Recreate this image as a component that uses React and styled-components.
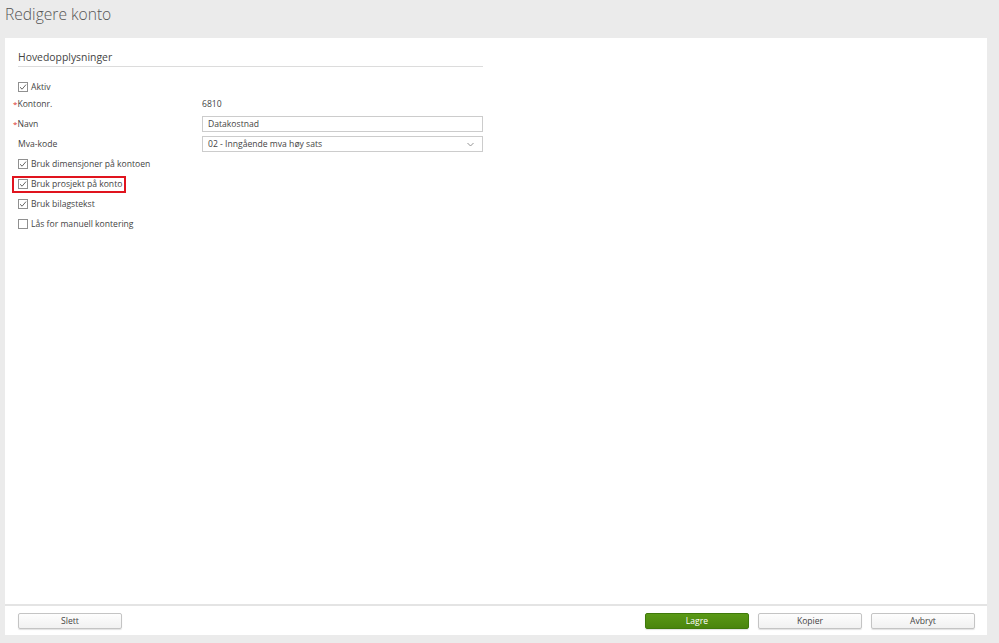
import React from "react";
import styled, { createGlobalStyle } from "styled-components";

const Global = createGlobalStyle`
  html, body { margin: 0; padding: 0; background: #ebebeb; }
  body { font-family: "Open Sans", "Liberation Sans", sans-serif; color: #444; }
  * { box-sizing: border-box; }
`;

const Page = styled.div`
  width: 999px;
  height: 643px;
  display: flex;
  flex-direction: column;
  padding: 0 12px 8px 5px;
`;

const Title = styled.h1`
  margin: 0;
  height: 38px;
  padding-top: 3px;
  font-size: 15.6px;
  line-height: 22px;
  font-weight: 300;
  color: #555;
`;

const Panel = styled.div`
  flex: 1;
  display: flex;
  flex-direction: column;
  gap: 2px;
  background: #e4e4e4;
`;

const Content = styled.div`
  flex: 1;
  background: #fff;
  padding: 12px 13px;
`;

const Section = styled.div`
  width: 465px;
`;

const SectionTitle = styled.div`
  font-size: 10.4px;
  line-height: 14px;
  color: #444;
  padding-bottom: 2px;
  border-bottom: 1px solid #dcdcdc;
`;

const Rows = styled.div`
  display: flex;
  flex-direction: column;
  margin-top: 13px;
`;

const Row = styled.div`
  display: grid;
  grid-template-columns: 184px 281px;
  align-items: center;
  height: 20px;
  font-size: 8.6px;
  color: #444;
`;

const Label = styled.div`
  margin-left: ${(p) => (p.$req ? "-5px" : "0")};
`;

const Star = styled.span`
  color: #d9302b;
  font-size: 8px;
`;

const ItemWrap = styled.div`
  height: ${(p) => p.$h || 20}px;
  display: flex;
  align-items: center;
`;

const CheckRow = styled.label`
  display: inline-flex;
  align-items: center;
  gap: 3px;
  font-size: 8.6px;
  color: #444;
  white-space: nowrap;
  ${(p) =>
    p.$highlight &&
    `
    border: 2px solid #e0141e;
    margin-left: -6px;
    padding: 0 2px 0 4px;
    height: 17px;
  `}
`;

const Box = styled.span`
  width: 10px;
  height: 10px;
  border: 1px solid #909090;
  background: #fff;
  display: inline-flex;
  align-items: center;
  justify-content: center;
`;

const Input = styled.div`
  height: 16px;
  border: 1px solid #ccc;
  padding: 0 5px;
  display: flex;
  align-items: center;
  font-size: 8.6px;
  color: #444;
  background: #fff;
`;

const Select = styled(Input)`
  justify-content: space-between;
  padding-right: 8px;
`;

const Footer = styled.div`
  height: 29px;
  background: #fff;
  display: flex;
  align-items: center;
  padding: 0 12px 0 13px;
`;

const Btn = styled.button`
  width: 104px;
  height: 16px;
  border-radius: 2px;
  font-family: "Open Sans", "Liberation Sans", sans-serif;
  font-size: 8.6px;
  padding: 0;
  cursor: pointer;
  border: 1px solid ${(p) => (p.$primary ? "#3f7a0a" : "#c4c4c4")};
  background: ${(p) =>
    p.$primary ? "linear-gradient(#5a9916, #4a850d)" : "linear-gradient(#fdfdfd, #f1f1f1)"};
  color: ${(p) => (p.$primary ? "#fff" : "#444")};
  box-shadow: 0 1px 1px rgba(0,0,0,0.12);
  margin-left: ${(p) => p.$ml || 0}px;
`;

const Spacer = styled.div`
  flex: 1;
`;

const Check = ({ checked }) => (
  <Box>
    {checked && (
      <svg width="8" height="8" viewBox="0 0 8 8">
        <path d="M1 4.2 L3.1 6.2 L7 1.6" fill="none" stroke="#555" strokeWidth="0.9" />
      </svg>
    )}
  </Box>
);

const CheckItem = ({ checked, children, highlight, h }) => (
  <ItemWrap $h={h}>
    <CheckRow $highlight={highlight}>
      <Check checked={checked} />
      <span>{children}</span>
    </CheckRow>
  </ItemWrap>
);

export default function App() {
  return (
    <>
      <Global />
      <Page>
        <Title>Redigere konto</Title>
        <Panel>
          <Content>
            <Section>
              <SectionTitle>Hovedopplysninger</SectionTitle>
              <Rows>
                <CheckItem checked h={14}>Aktiv</CheckItem>
                <Row>
                  <Label $req>
                    <Star>*</Star>Kontonr.
                  </Label>
                  <div>6810</div>
                </Row>
                <Row>
                  <Label $req>
                    <Star>*</Star>Navn
                  </Label>
                  <Input>Datakostnad</Input>
                </Row>
                <Row>
                  <Label>Mva-kode</Label>
                  <Select>
                    <span>02 - Inngående mva høy sats</span>
                    <svg width="7" height="5" viewBox="0 0 7 5">
                      <path d="M0.5 1 L3.5 4 L6.5 1" fill="none" stroke="#888" strokeWidth="0.9" />
                    </svg>
                  </Select>
                </Row>
                <CheckItem checked>Bruk dimensjoner på kontoen</CheckItem>
                <CheckItem checked highlight>Bruk prosjekt på konto</CheckItem>
                <CheckItem checked>Bruk bilagstekst</CheckItem>
                <CheckItem>Lås for manuell kontering</CheckItem>
              </Rows>
            </Section>
          </Content>
          <Footer>
            <Btn>Slett</Btn>
            <Spacer />
            <Btn $primary>Lagre</Btn>
            <Btn $ml={9}>Kopier</Btn>
            <Btn $ml={9}>Avbryt</Btn>
          </Footer>
        </Panel>
      </Page>
    </>
  );
}
